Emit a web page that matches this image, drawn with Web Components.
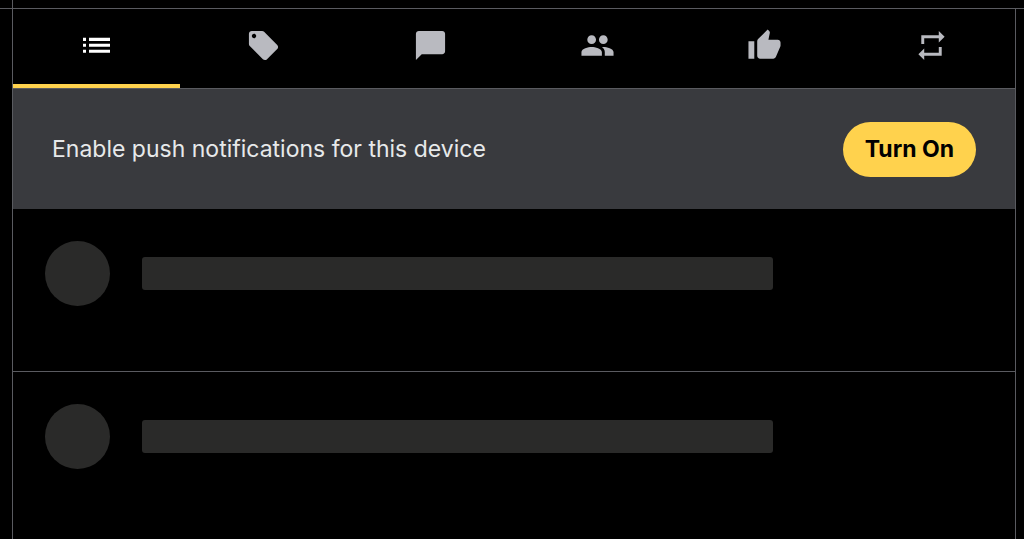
<!DOCTYPE html>
<html lang="en">
<head>
<meta charset="utf-8">
<meta name="viewport" content="width=device-width, initial-scale=1">
<title>Notifications</title>
<style>
  html, body { margin: 0; background: #000; }
  body {
    --line: #5a5b60;
    --accent: #ffd24d;
    --muted: #b9bac0;
    font-family: Inter, "Liberation Sans", sans-serif;
    color: #e7e9ea;
  }
</style>
</head>
<body>
<notifications-column>
  <filter-tabs slot="tabs"></filter-tabs>
  <push-banner>Enable push notifications for this device<span slot="action">Turn On</span></push-banner>
  <skeleton-row></skeleton-row>
  <skeleton-row></skeleton-row>
</notifications-column>
<script>
const define = (name, html) => customElements.define(name, class extends HTMLElement {
  constructor() {
    super();
    this.attachShadow({ mode: "open" }).innerHTML = html;
  }
});

define("notifications-column", `
  <style>
    :host { display: flex; flex-direction: column; box-sizing: border-box; min-height: 100vh; }
    .top { height: 8px; margin-left: 12px; border-left: 1px solid var(--line); }
    .rule { height: 1px; background: var(--line); }
    main { flex: 1; margin: 0 8px 0 12px; border: solid var(--line); border-width: 0 1px; }
  </style>
  <div class="top"></div>
  <div class="rule"></div>
  <main><slot name="tabs"></slot><slot></slot></main>
`);

// Each tab: label, icon path, side of the icon's square view box.
const tabs = [
  ["All", "M4 9.700h3v3.200H4zM10 9.700h21v3.200H10zM4 15.800h3v3H4zM10 15.800h21v3H10zM4 21.700h3v3H4zM10 21.700h21v3H10z", 35],
  ["Mentions", "M21.41 11.58l-9-9C12.05 2.22 11.55 2 11 2H4c-1.1 0-2 .9-2 2v7c0 .55.22 1.05.59 1.42l9 9c.36.36.86.58 1.41.58s1.05-.22 1.41-.59l7-7c.37-.36.59-.86.59-1.41s-.23-1.06-.59-1.42zM5.5 7C4.67 7 4 6.33 4 5.5S4.67 4 5.5 4 7 4.67 7 5.5 6.33 7 5.5 7z", 24],
  ["Replies", "M20 2H4c-1.1 0-2 .9-2 2v18l4-4h14c1.1 0 2-.9 2-2V4c0-1.1-.9-2-2-2z", 24],
  ["Follows", "M16 11c1.66 0 2.99-1.34 2.99-3S17.66 5 16 5s-3 1.34-3 3 1.34 3 3 3zm-8 0c1.66 0 2.99-1.34 2.99-3S9.66 5 8 5 5 6.34 5 8s1.34 3 3 3zm0 2c-2.33 0-7 1.17-7 3.5V19h14v-2.500c0-2.330-4.670-3.500-7-3.500zm8 0c-.29 0-.62.02-.97.05 1.16.84 1.97 1.97 1.97 3.45V19h6v-2.500c0-2.330-4.670-3.500-7-3.500z", 24],
  ["Likes", "M1 21h4V9H1v12zm22-11c0-1.100-.9-2-2-2h-6.310l.95-4.570.03-.32c0-.41-.17-.79-.44-1.060L14.170 1 7.590 7.590C7.220 7.950 7 8.450 7 9v10c0 1.100.9 2 2 2h9c.83 0 1.540-.5 1.840-1.220l3.020-7.050c.09-.23.14-.47.14-.73v-2z", 24],
  ["Reposts", "M7 7h10v3l4-4-4-4v3H5v6h2V7zm10 10H7v-3l-4 4 4 4v-3h12v-6h-2v4z", 24]
];

define("filter-tabs", `
  <style>
    :host { display: block; border-bottom: 1px solid var(--line); }
    nav { display: grid; grid-template-columns: repeat(6, 1fr); }
    button {
      display: grid; place-items: center; box-sizing: border-box; height: 79px; margin: 0;
      padding: 0 0 3px; border: 0; border-bottom: 4px solid transparent;
      background: none; color: var(--muted);
    }
    button[aria-pressed="true"] { color: #fff; border-color: var(--accent); }
    svg { display: block; width: 35px; height: 35px; fill: currentColor; }
  </style>
  <nav>${tabs.map(([label, d, box], i) => `
    <button type="button" aria-label="${label}" aria-pressed="${i === 0}">
      <svg viewBox="0 0 ${box} ${box}" aria-hidden="true"><path d="${d}"/></svg>
    </button>`).join("")}
  </nav>
`);

define("push-banner", `
  <style>
    :host {
      display: flex; align-items: center; justify-content: space-between; gap: 24px;
      box-sizing: border-box; min-height: 120px; padding: 33px 39px 32px; background: #393a3e;
      font-size: 23px; line-height: 33px;
    }
    button {
      flex: none; height: 55px; padding: 0 22px; border: 0; border-radius: 28px;
      background: var(--accent); color: #000; font: 700 23px/33px Inter, "Liberation Sans", sans-serif;
    }
  </style>
  <span><slot></slot></span>
  <button type="button"><slot name="action"></slot></button>
`);

define("skeleton-row", `
  <style>
    :host {
      display: flex; gap: 32px; box-sizing: border-box; height: 163px; padding: 32px;
      border-bottom: 1px solid var(--line);
    }
    :host(:last-of-type) { border-bottom: 0; }
    .avatar { flex: none; width: 65px; height: 65px; border-radius: 50%; background: #2a2a29; }
    .body { flex: 1; padding-top: 16px; }
    .bar { width: 75%; height: 33px; border-radius: 3px; background: #2a2a29; }
  </style>
  <div class="avatar"></div>
  <div class="body"><div class="bar"></div></div>
`);
</script>
</body>
</html>
